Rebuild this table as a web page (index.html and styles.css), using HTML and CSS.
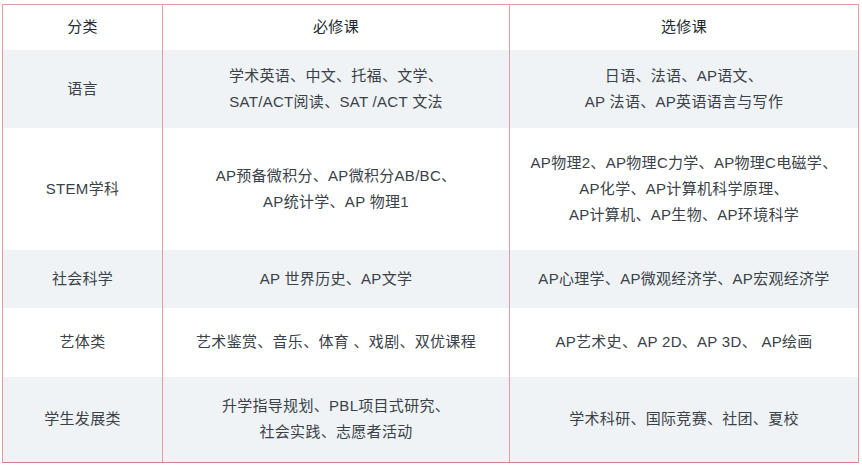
FILE: index.html
```html
<!DOCTYPE html>
<html lang="zh-CN">
<head>
<meta charset="utf-8">
<link rel="stylesheet" href="styles.css">
</head>
<body>
<table class="course-table">
  <colgroup>
    <col class="c1"><col class="c2"><col class="c3">
  </colgroup>
  <thead>
    <tr class="r-head"><th>分类</th><th>必修课</th><th>选修课</th></tr>
  </thead>
  <tbody>
    <tr class="r1 alt"><td>语言</td><td>学术英语、中文、托福、文学、<br>SAT/ACT阅读、SAT /ACT 文法</td><td>日语、法语、AP语文、<br>AP 法语、AP英语语言与写作</td></tr>
    <tr class="r2"><td>STEM学科</td><td>AP预备微积分、AP微积分AB/BC、<br>AP统计学、AP 物理1</td><td class="tall">AP物理2、AP物理C力学、AP物理C电磁学、<br>AP化学、AP计算机科学原理、<br>AP计算机、AP生物、AP环境科学</td></tr>
    <tr class="r3 alt"><td>社会科学</td><td>AP 世界历史、AP文学</td><td>AP心理学、AP微观经济学、AP宏观经济学</td></tr>
    <tr class="r4"><td>艺体类</td><td>艺术鉴赏、音乐、体育 、戏剧、双优课程</td><td>AP艺术史、AP 2D、AP 3D、 AP绘画</td></tr>
    <tr class="r5 alt"><td>学生发展类</td><td class="short">升学指导规划、PBL项目式研究、<br>社会实践、志愿者活动</td><td>学术科研、国际竞赛、社团、夏校</td></tr>
  </tbody>
</table>
</body>
</html>
```
FILE: styles.css
```css
html, body {
  margin: 0;
  padding: 0;
  background: #ffffff;
}
body {
  padding: 4px 0 0 2px;
  font-family: "Liberation Sans", "Noto Sans CJK SC", sans-serif;
  color: #3a4148;
  font-size: 15px;
  letter-spacing: 0.3px;
}
.course-table {
  border-collapse: collapse;
  table-layout: fixed;
  width: 856px;
  border: 1px solid #e69aa4;
  border-bottom-color: #d97a86;
}
.c1 { width: 160px; }
.c2 { width: 347px; }
.c3 { width: 349px; }
.course-table th,
.course-table td {
  border-left: 1px solid #e69aa4;
  border-right: 1px solid #e69aa4;
  text-align: center;
  vertical-align: middle;
  padding: 0 4px;
  line-height: 26px;
  font-weight: normal;
}
.course-table th {
  color: #232a31;
}
.alt td { background: #eff3f6; }
.r-head { height: 45px; }
.r1 { height: 78px; }
.r2 { height: 122px; }
.r3 { height: 58px; }
.r4 { height: 69px; }
.r5 { height: 86px; }
.tall { line-height: 28px; }
.short { line-height: 24px; }
```
